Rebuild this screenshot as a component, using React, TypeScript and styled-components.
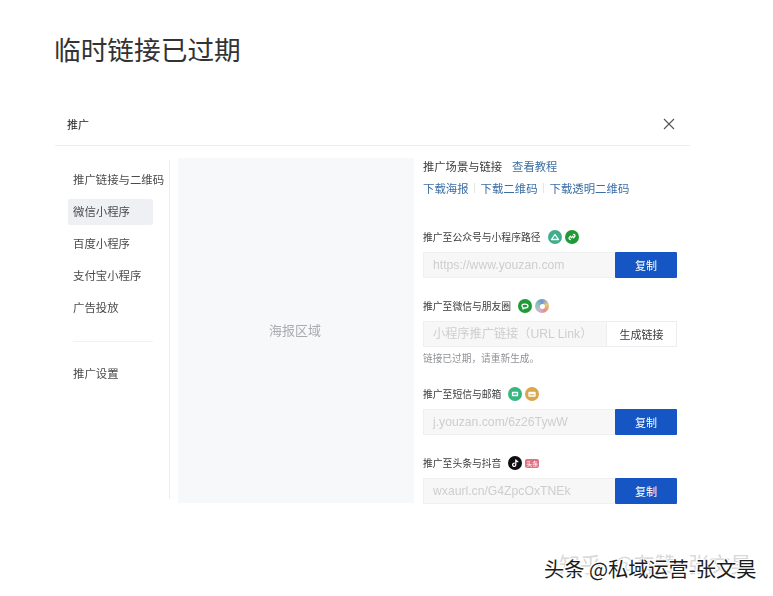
import styled, { createGlobalStyle } from "styled-components"

const GlobalStyle = createGlobalStyle`
    html, body {
        margin: 0;
        padding: 0;
        background: #fff;
    }
    body {
        font-family: "Noto Sans CJK SC", "Liberation Sans", sans-serif;
        color: #323233;
    }
`

const Page = styled.div`
    position: relative;
    width: 773px;
    height: 596px;
    overflow: hidden;
    padding: 30px 83px 0 55px;
    box-sizing: border-box;
`

const Title = styled.h1`
    margin: 0 0 0 -1px;
    height: 38px;
    line-height: 38px;
    font-size: 26.7px;
    font-weight: 400;
    color: #333;
`

const Modal = styled.div`
    margin-top: 37px;
    filter: blur(0.35px);
`

const ModalHeader = styled.div`
    display: flex;
    align-items: center;
    justify-content: space-between;
    height: 38px;
    padding: 0 15px 2px 12px;
    border-bottom: 1px solid #ebedf0;
    font-size: 11px;
    font-weight: 400;
    color: #222;
`

const CloseIcon = () => (
    <svg width="12" height="12" viewBox="0 0 12 12" fill="none" stroke="#555" strokeWidth="1.1">
        <path d="M1 1l10 10M11 1L1 11" />
    </svg>
)

const ModalBody = styled.div`
    display: flex;
    padding-top: 12px;
`

const Sidebar = styled.nav`
    width: 115px;
    height: 339px;
    margin-top: 2px;
    padding: 7px 16px 0 13px;
    box-sizing: border-box;
    border-right: 1px solid #ebedf0;
    display: flex;
    flex-direction: column;
    gap: 6px;
`

const NavItem = styled.div<{ $active?: boolean }>`
    height: 26px;
    line-height: 25px;
    padding-left: 5px;
    white-space: nowrap;
    font-size: 11.4px;
    color: #4a4b4d;
    border-radius: 2px;
    background: ${({ $active }) => ($active ? "#eef0f4" : "transparent")};
`

const NavDivider = styled.div`
    height: 1px;
    margin: 14px 0 13px 5px;
    background: #f0f1f3;
`

const Poster = styled.div`
    width: 236px;
    height: 345px;
    margin-left: 8px;
    padding: 0 2px 2px 0;
    box-sizing: border-box;
    display: flex;
    align-items: center;
    justify-content: center;
    background: #f7f8fa;
    color: #a9abae;
    font-size: 13px;
`

const Panel = styled.div`
    width: 254px;
    margin-left: 9px;
`

const SceneRow = styled.div`
    display: flex;
    gap: 10px;
    height: 18px;
    line-height: 17px;
    font-size: 11.3px;
    color: #3c3d40;
`

const LinkText = styled.span`
    color: #3b6ea5;
`

const DownloadRow = styled.div`
    display: flex;
    align-items: center;
    margin-top: 3px;
    height: 18px;
    font-size: 11.4px;
    white-space: nowrap;
`

const Sep = styled.span`
    width: 1px;
    height: 10px;
    margin: 0 5.5px;
    background: #e4e6ea;
`

const Field = styled.div<{ $gap: number }>`
    margin-top: ${({ $gap }) => $gap}px;
`

const Label = styled.div`
    display: flex;
    align-items: center;
    height: 14px;
    font-size: 9.8px;
    line-height: 14px;
    color: #3c3d40;
`

const Badges = styled.span`
    display: flex;
    align-items: center;
    gap: 3px;
    margin-left: 7px;
`

const Badge = styled.span<{ $bg: string }>`
    display: flex;
    align-items: center;
    justify-content: center;
    width: 14px;
    height: 14px;
    border-radius: 50%;
    background: ${({ $bg }) => $bg};
`

const RainbowBadge = styled.span`
    width: 14px;
    height: 14px;
    border-radius: 50%;
    background: conic-gradient(#6c93d8, #e9c77d, #e58f7d, #c9b6d8, #8cc6a6, #6c93d8);
    display: flex;
    align-items: center;
    justify-content: center;
    &::after {
        content: "";
        width: 5px;
        height: 5px;
        border-radius: 50%;
        background: #fff;
    }
`

const Tag = styled.span`
    width: 14px;
    height: 9px;
    border-radius: 2px;
    background: #e0707f;
    display: flex;
    align-items: center;
    justify-content: center;
    color: #fff;
    font-size: 6px;
    line-height: 9px;
`

const InputRow = styled.div`
    display: flex;
    height: 26px;
    margin-top: 8px;
`

const Input = styled.div`
    flex: 1;
    min-width: 0;
    padding-left: 9px;
    line-height: 25px;
    box-sizing: border-box;
    background: #f7f7f7;
    border: 1px solid #f0f0f0;
    border-right: none;
    color: #cdced0;
    font-family: "Liberation Sans", "Noto Sans CJK SC", sans-serif;
    font-size: 12.2px;
    white-space: nowrap;
    overflow: hidden;
`

const PrimaryButton = styled.div`
    width: 62px;
    text-align: center;
    line-height: 26px;
    background: #1556c4;
    color: #fff;
    font-size: 11px;
    border-radius: 1px;
`

const GhostButton = styled.div`
    width: 71px;
    text-align: center;
    line-height: 24px;
    background: #fff;
    border: 1px solid #ebedf0;
    box-sizing: border-box;
    color: #3c3d40;
    font-size: 11px;
`

const Hint = styled.div`
    margin-top: 4px;
    height: 14px;
    line-height: 14px;
    font-size: 9.7px;
    color: #909296;
`

const Watermark = styled.div`
    position: absolute;
    left: 559px;
    top: 550px;
    font-size: 21px;
    line-height: 26px;
    word-spacing: 8px;
    color: #d9d9d9;
    white-space: nowrap;
`

const Credit = styled.div`
    position: absolute;
    left: 544px;
    top: 557px;
    font-size: 20.2px;
    line-height: 24px;
    color: #1c1c1c;
    white-space: nowrap;
    text-shadow: 1px 1px 0 #fff, -1px 1px 0 #fff, 1px -1px 0 #fff, -1px -1px 0 #fff;
`

const Glyph = ({ d, stroke = "#fff" }: { d: string; stroke?: string }) => (
    <svg width="10" height="10" viewBox="0 0 10 10" fill="none" stroke={stroke} strokeWidth="1.3" strokeLinecap="round" strokeLinejoin="round">
        <path d={d} />
    </svg>
)

const navItems = ["推广链接与二维码", "微信小程序", "百度小程序", "支付宝小程序", "广告投放"]

export default function App() {
    return (
        <Page>
            <GlobalStyle />
            <Title>临时链接已过期</Title>
            <Modal>
                <ModalHeader>
                    <span>推广</span>
                    <CloseIcon />
                </ModalHeader>
                <ModalBody>
                    <Sidebar>
                        {navItems.map((item) => (
                            <NavItem key={item} $active={item === "微信小程序"}>{item}</NavItem>
                        ))}
                        <NavDivider />
                        <NavItem>推广设置</NavItem>
                    </Sidebar>
                    <Poster>海报区域</Poster>
                    <Panel>
                        <SceneRow>
                            <span>推广场景与链接</span>
                            <LinkText>查看教程</LinkText>
                        </SceneRow>
                        <DownloadRow>
                            <LinkText>下载海报</LinkText>
                            <Sep />
                            <LinkText>下载二维码</LinkText>
                            <Sep />
                            <LinkText>下载透明二维码</LinkText>
                        </DownloadRow>
                        <Field $gap={33}>
                            <Label>
                                推广至公众号与小程序路径
                                <Badges>
                                    <Badge $bg="#3fae8c"><Glyph d="M1.5 7.5L5 2.5l3.5 5zM3.5 7.5h3" /></Badge>
                                    <Badge $bg="#1f9a37"><Glyph d="M3.4 7.6a1.3 1.3 0 0 1-1-2.2L3.6 4.2M6.6 2.4a1.3 1.3 0 0 1 1 2.2L6.4 5.8M4.2 5.8l1.6-1.6" /></Badge>
                                </Badges>
                            </Label>
                            <InputRow>
                                <Input>https://www.youzan.com</Input>
                                <PrimaryButton>复制</PrimaryButton>
                            </InputRow>
                        </Field>
                        <Field $gap={21}>
                            <Label>
                                推广至微信与朋友圈
                                <Badges>
                                    <Badge $bg="#1f9a37"><Glyph d="M2 4.5c0-2 6-2 6 .5 0 1.5-2 2-3.5 2L3 8V6.8C2.4 6.3 2 5.5 2 4.5z" /></Badge>
                                    <RainbowBadge />
                                </Badges>
                            </Label>
                            <InputRow>
                                <Input>小程序推广链接（URL Link）</Input>
                                <GhostButton>生成链接</GhostButton>
                            </InputRow>
                            <Hint>链接已过期，请重新生成。</Hint>
                        </Field>
                        <Field $gap={22}>
                            <Label>
                                推广至短信与邮箱
                                <Badges>
                                    <Badge $bg="#35b77f"><Glyph d="M2.5 3.5h5v3h-5z" /></Badge>
                                    <Badge $bg="#dba64d"><Glyph d="M2 3.5h6v3.5H2zM2 4.5h6" /></Badge>
                                </Badges>
                            </Label>
                            <InputRow>
                                <Input>j.youzan.com/6z26TywW</Input>
                                <PrimaryButton>复制</PrimaryButton>
                            </InputRow>
                        </Field>
                        <Field $gap={21}>
                            <Label>
                                推广至头条与抖音
                                <Badges>
                                    <Badge $bg="#0d0d12"><Glyph d="M5.8 1.8v5a1.6 1.6 0 1 1-1.6-1.6M5.8 2c.3 1 1 1.6 2 1.7" /></Badge>
                                    <Tag>头条</Tag>
                                </Badges>
                            </Label>
                            <InputRow>
                                <Input>wxaurl.cn/G4ZpcOxTNEk</Input>
                                <PrimaryButton>复制</PrimaryButton>
                            </InputRow>
                        </Field>
                    </Panel>
                </ModalBody>
            </Modal>
            <Watermark>知乎 @有赞 张文昊</Watermark>
            <Credit>头条 @私域运营-张文昊</Credit>
        </Page>
    )
}
